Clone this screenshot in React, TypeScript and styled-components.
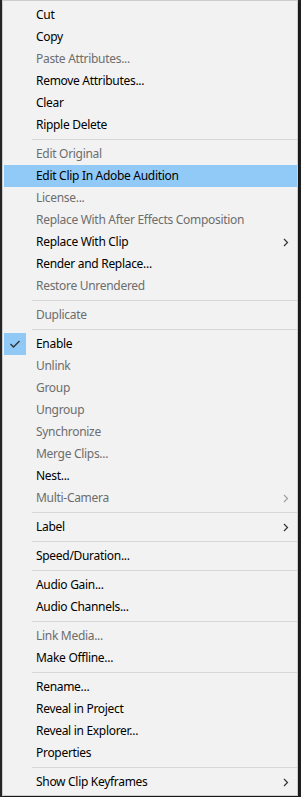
import React from 'react';
import styled, { createGlobalStyle } from 'styled-components';

const GlobalStyle = createGlobalStyle`
  html, body {
    margin: 0;
    padding: 0;
    background: #262626;
    width: 301px;
    height: 797px;
    overflow: hidden;
  }
`;

export const Screen = styled.div`
  width: 301px;
  height: 797px;
  background: #242424;
  padding-left: 2px;
  box-sizing: border-box;
`;

export const Menu = styled.ul`
  list-style: none;
  margin: 0;
  width: 296px;
  box-sizing: border-box;
  background: #f2f2f2;
  border: 1px solid #cccccc;
  padding: 3px 0 2px 1px;
  font-family: 'Noto Sans', 'Open Sans', sans-serif;
  font-size: 12px;
  letter-spacing: -0.3px;
  box-shadow: 2px 2px 2px rgba(0, 0, 0, 0.35);
`;

export const Item = styled.li<{ $disabled?: boolean; $active?: boolean }>`
  position: relative;
  display: flex;
  align-items: center;
  height: 22px;
  padding-left: 32px;
  color: ${(p) => (p.$disabled ? '#6d6d6d' : '#000000')};
  background: ${(p) => (p.$active ? '#91c9f7' : 'transparent')};
  white-space: nowrap;
`;

export const Label = styled.span`
  flex: 1;
  line-height: 22px;
`;

export const Separator = styled.li`
  height: 1px;
  margin: 3px 0 3px 28px;
  background: #d7d7d7;
`;

export const CheckBox = styled.span`
  position: absolute;
  left: 0;
  top: 0;
  width: 22px;
  height: 22px;
  background: #90c8f6;
  display: flex;
  align-items: center;
  justify-content: center;
`;

export const Arrow = styled.span<{ $disabled?: boolean }>`
  width: 14px;
  display: flex;
  align-items: center;
  color: ${(p) => (p.$disabled ? '#a0a0a0' : '#333333')};
`;

type Entry =
  | { sep: true }
  | { label: string; off?: boolean; on?: boolean; checked?: boolean; sub?: boolean };

const entries: Entry[] = [
  { label: 'Cut' },
  { label: 'Copy' },
  { label: 'Paste Attributes...', off: true },
  { label: 'Remove Attributes...' },
  { label: 'Clear' },
  { label: 'Ripple Delete' },
  { sep: true },
  { label: 'Edit Original', off: true },
  { label: 'Edit Clip In Adobe Audition', on: true },
  { label: 'License...', off: true },
  { label: 'Replace With After Effects Composition', off: true },
  { label: 'Replace With Clip', sub: true },
  { label: 'Render and Replace...' },
  { label: 'Restore Unrendered', off: true },
  { sep: true },
  { label: 'Duplicate', off: true },
  { sep: true },
  { label: 'Enable', checked: true },
  { label: 'Unlink', off: true },
  { label: 'Group', off: true },
  { label: 'Ungroup', off: true },
  { label: 'Synchronize', off: true },
  { label: 'Merge Clips...', off: true },
  { label: 'Nest...' },
  { label: 'Multi-Camera', off: true, sub: true },
  { sep: true },
  { label: 'Label', sub: true },
  { sep: true },
  { label: 'Speed/Duration...' },
  { sep: true },
  { label: 'Audio Gain...' },
  { label: 'Audio Channels...' },
  { sep: true },
  { label: 'Link Media...', off: true },
  { label: 'Make Offline...' },
  { sep: true },
  { label: 'Rename...' },
  { label: 'Reveal in Project' },
  { label: 'Reveal in Explorer...' },
  { label: 'Properties' },
  { sep: true },
  { label: 'Show Clip Keyframes', sub: true },
];

const Chevron = () => (
  <svg width="6" height="9" viewBox="0 0 6 9">
    <path d="M1 1 L4.5 4.5 L1 8" fill="none" stroke="currentColor" strokeWidth="1.2" />
  </svg>
);

const Check = () => (
  <svg width="12" height="10" viewBox="0 0 12 10">
    <path d="M1.5 5 L4.5 8 L10.5 2" fill="none" stroke="#333" strokeWidth="1.4" />
  </svg>
);

export default function App() {
  return (
    <Screen>
      <GlobalStyle />
      <Menu>
        {entries.map((e, i) =>
          'sep' in e ? (
            <Separator key={i} />
          ) : (
            <Item key={i} $disabled={e.off} $active={e.on}>
              {e.checked && (
                <CheckBox>
                  <Check />
                </CheckBox>
              )}
              <Label>{e.label}</Label>
              {e.sub && (
                <Arrow $disabled={e.off}>
                  <Chevron />
                </Arrow>
              )}
            </Item>
          ),
        )}
      </Menu>
    </Screen>
  );
}
